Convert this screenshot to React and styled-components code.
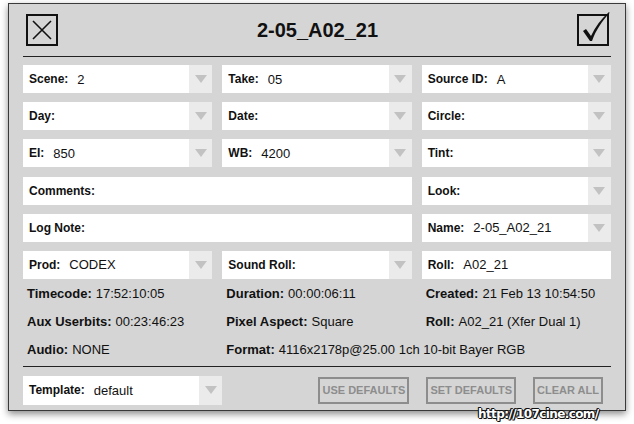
import styled, { createGlobalStyle } from "styled-components"

const GlobalStyle = createGlobalStyle`
    html, body {
        margin: 0;
        background: #ffffff;
        font-family: "Liberation Sans", Arial, sans-serif;
        color: #111;
    }
`

const Page = styled.div`
    position: relative;
    width: 634px;
    height: 424px;
    padding: 3px 8px 0;
    box-sizing: border-box;
`

const Panel = styled.div`
    width: 618px;
    height: 408px;
    box-sizing: border-box;
    border: 1px solid #3a3a3a;
    background: #d5d5d5;
    padding: 0 14px;
    box-shadow: 0 3px 7px rgba(0, 0, 0, 0.45);
`

const Header = styled.div`
    height: 52px;
    display: grid;
    grid-template-columns: 1fr auto 1fr;
    align-items: center;
    padding: 0 2px 0 3px;
`

const Title = styled.div`
    font-size: 20px;
    font-weight: bold;
    color: #111;
`

const IconBox = styled.div`
    width: 32px;
    height: 32px;
    justify-self: ${p => (p.$right ? "end" : "start")};
`

const Rule = styled.div`
    height: 1px;
    background: #222;
    margin-top: ${p => p.$top || 0}px;
`

const Grid = styled.div`
    display: grid;
    grid-template-columns: repeat(3, minmax(0, 1fr));
    column-gap: 10px;
    row-gap: ${p => p.$rowGap || 0}px;
    grid-auto-rows: 28px;
    margin-top: ${p => p.$top || 0}px;
`

const Field = styled.div`
    display: flex;
    align-items: stretch;
    background: #fff;
    grid-column: span ${p => p.$span || 1};
    width: ${p => (p.$width ? `${p.$width}px` : "auto")};
    height: ${p => (p.$height ? `${p.$height}px` : "auto")};
`

const FieldText = styled.div`
    flex: 1;
    display: flex;
    align-items: center;
    padding-left: 6px;
    white-space: nowrap;
`

const Label = styled.span`
    font-weight: bold;
    font-size: 12px;
`

const Value = styled.span`
    font-size: 13px;
    margin-left: 9px;
`

const Arrow = styled.div`
    width: 23px;
    background: #ebebeb;
    display: flex;
    align-items: center;
    justify-content: center;

    &::after {
        content: "";
        border-left: 6px solid transparent;
        border-right: 6px solid transparent;
        border-top: 8px solid #c2c2c2;
    }
`

const Info = styled.div`
    display: flex;
    align-items: center;
    padding-left: 4px;
    font-size: 13px;
    white-space: nowrap;

    b {
        margin-right: 4px;
    }
`

const Footer = styled.div`
    display: flex;
    align-items: center;
    margin-top: 9px;
`

const Buttons = styled.div`
    display: flex;
    gap: 17px;
    margin-left: auto;
    margin-right: 8px;
`

const Button = styled.button`
    height: 27px;
    padding: 0 2px;
    border: 2px solid #8d8d8d;
    background: transparent;
    color: #8d8d8d;
    font-family: "Liberation Sans", Arial, sans-serif;
    font-weight: bold;
    font-size: 11px;
    white-space: nowrap;
`

const Watermark = styled.div`
    position: absolute;
    left: 478px;
    top: 407px;
    font-family: "DejaVu Sans", sans-serif;
    font-weight: bold;
    font-size: 12px;
    letter-spacing: -0.6px;
    color: #fff;
    text-shadow: -1px 0 #111, 1px 0 #111, 0 -1px #111, 0 1px #111, 1px 1px #111, -1px -1px #111;
`

const CloseIcon = () => (
    <svg width="32" height="32" viewBox="0 0 32 32">
        <rect x="1" y="1" width="30" height="30" fill="none" stroke="#111" strokeWidth="2" />
        <path d="M7 7 L25 25 M25 7 L7 25" stroke="#111" strokeWidth="1.6" />
    </svg>
)

const CheckIcon = () => (
    <svg width="32" height="32" viewBox="0 0 32 32" style={{ overflow: "visible" }}>
        <rect x="1" y="1" width="30" height="30" fill="none" stroke="#111" strokeWidth="2" />
        <path d="M6 17 L9 15 L14 22 C18 13 24 5 32 -2 L32.6 -1 C25 7 19 16 15 27 L13 27 Z" fill="#111" />
    </svg>
)

const Select = ({ label, value, arrow = true, span }) => (
    <Field $span={span}>
        <FieldText>
            <Label>{label}</Label>
            {value && <Value>{value}</Value>}
        </FieldText>
        {arrow && <Arrow />}
    </Field>
)

const fields = [
    { label: "Scene:", value: "2" },
    { label: "Take:", value: "05" },
    { label: "Source ID:", value: "A" },
    { label: "Day:" },
    { label: "Date:" },
    { label: "Circle:" },
    { label: "EI:", value: "850" },
    { label: "WB:", value: "4200" },
    { label: "Tint:" },
    { label: "Comments:", arrow: false, span: 2 },
    { label: "Look:" },
    { label: "Log Note:", arrow: false, span: 2 },
    { label: "Name:", value: "2-05_A02_21" },
    { label: "Prod:", value: "CODEX" },
    { label: "Sound Roll:" },
    { label: "Roll:", value: "A02_21", arrow: false },
]

const info = [
    ["Timecode:", "17:52:10:05"],
    ["Duration:", "00:00:06:11"],
    ["Created:", "21 Feb 13 10:54:50"],
    ["Aux Userbits:", "00:23:46:23"],
    ["Pixel Aspect:", "Square"],
    ["Roll:", "A02_21 (Xfer Dual 1)"],
    ["Audio:", "NONE"],
    ["Format:", "4116x2178p@25.00 1ch 10-bit Bayer RGB"],
]

const App = () => {
    return (
        <Page>
            <GlobalStyle />
            <Panel>
                <Header>
                    <IconBox><CloseIcon /></IconBox>
                    <Title>2-05_A02_21</Title>
                    <IconBox $right><CheckIcon /></IconBox>
                </Header>
                <Rule />
                <Grid $top={8} $rowGap={9.2}>
                    {fields.map((f) => (
                        <Select key={f.label + (f.value || "")} {...f} />
                    ))}
                </Grid>
                <Grid $top={1}>
                    {info.map(([k, v]) => (
                        <Info key={k + v}><b>{k}</b>{v}</Info>
                    ))}
                </Grid>
                <Rule $top={2} />
                <Footer>
                    <Field $width={199} $height={29}>
                        <FieldText>
                            <Label>Template:</Label>
                            <Value>default</Value>
                        </FieldText>
                        <Arrow />
                    </Field>
                    <Buttons>
                        <Button>USE DEFAULTS</Button>
                        <Button>SET DEFAULTS</Button>
                        <Button>CLEAR ALL</Button>
                    </Buttons>
                </Footer>
            </Panel>
            <Watermark>http://107cine.com/</Watermark>
        </Page>
    )
}

export default App
